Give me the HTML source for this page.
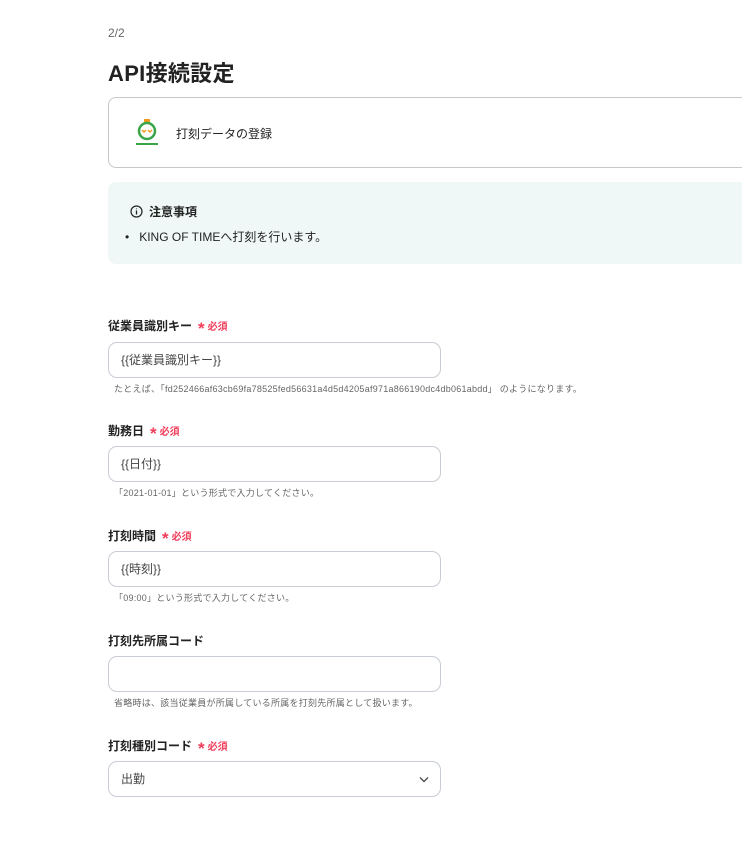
<!DOCTYPE html>
<html><head><meta charset="utf-8"><style>
body{margin:0;width:742px;height:850px;overflow:hidden;background:#fff;font-family:"Liberation Sans","Noto Sans CJK JP",sans-serif;color:#222;position:relative}
.a{position:absolute}
.step{left:108px;top:26px;font-size:12px;color:#666}
h1{position:absolute;left:108px;top:56px;margin:0;font-size:22px;font-weight:bold;letter-spacing:0.3px}
.card{left:108px;top:97px;width:660px;height:71px;border:1px solid #c8c8cc;border-radius:8px;box-sizing:border-box}
.note{left:108px;top:182px;width:660px;height:82px;background:#eff8f7;border-radius:8px}
.lbl{left:108px;font-size:12px;font-weight:bold}
.req{color:#f03d5a;font-size:10px;font-weight:bold;margin-left:6px}
.req b{font-size:17px;vertical-align:-4px;margin-right:3px}
.in{left:108px;width:333px;height:36px;border:1px solid #c8ccd4;border-radius:9px;box-sizing:border-box;font-size:12px;color:#444;padding:8px 12px}
.hint{left:114px;font-size:9px;color:#666;letter-spacing:0.25px}
</style></head><body>
<div class="a step">2/2</div>
<h1>API接続設定</h1>
<div class="a card">
<svg class="a" style="left:24px;top:20px" width="28" height="30" viewBox="0 0 28 30"><rect x="11" y="1" width="6" height="3" fill="#f29a1f"/><circle cx="14" cy="13" r="8" fill="none" stroke="#3aa548" stroke-width="2.5"/><path d="M9 12l2 2 2-2M15 12l2 2 2-2" stroke="#f29a1f" stroke-width="1.5" fill="none"/><rect x="3" y="25" width="22" height="2" fill="#3aa548"/></svg>
<div class="a" style="left:67px;top:27px;font-size:12px">打刻データの登録</div>
</div>
<div class="a note">
<svg class="a" style="left:22px;top:23px" width="13" height="13" viewBox="0 0 13 13"><circle cx="6.5" cy="6.5" r="5.5" fill="none" stroke="#222" stroke-width="1.2"/><path d="M6.5 5.5v4M6.5 3.5v.8" stroke="#222" stroke-width="1.3"/></svg>
<div class="a" style="left:41px;top:21px;font-size:12px;font-weight:bold">注意事項</div>
<div class="a" style="left:17px;top:46px;font-size:12px">•&nbsp;&nbsp;&nbsp;KING OF TIMEへ打刻を行います。</div>
</div>
<div class="a lbl" style="top:317px">従業員識別キー<span class="req"><b>*</b>必須</span></div>
<div class="a in" style="top:342px">{{従業員識別キー}}</div>
<div class="a hint" style="top:382px">たとえば、「fd252466af63cb69fa78525fed56631a4d5d4205af971a866190dc4db061abdd」 のようになります。</div>
<div class="a lbl" style="top:422px">勤務日<span class="req"><b>*</b>必須</span></div>
<div class="a in" style="top:446px">{{日付}}</div>
<div class="a hint" style="top:486px">「2021-01-01」という形式で入力してください。</div>
<div class="a lbl" style="top:527px">打刻時間<span class="req"><b>*</b>必須</span></div>
<div class="a in" style="top:551px">{{時刻}}</div>
<div class="a hint" style="top:591px">「09:00」という形式で入力してください。</div>
<div class="a lbl" style="top:632px">打刻先所属コード</div>
<div class="a in" style="top:656px"></div>
<div class="a hint" style="top:696px">省略時は、該当従業員が所属している所属を打刻先所属として扱います。</div>
<div class="a lbl" style="top:737px">打刻種別コード<span class="req"><b>*</b>必須</span></div>
<div class="a in" style="top:761px">出勤
<svg class="a" style="right:11px;top:14px" width="10" height="7" viewBox="0 0 10 7"><path d="M1 1.5l4 4 4-4" stroke="#555" stroke-width="1.5" fill="none"/></svg></div>
</body></html>
